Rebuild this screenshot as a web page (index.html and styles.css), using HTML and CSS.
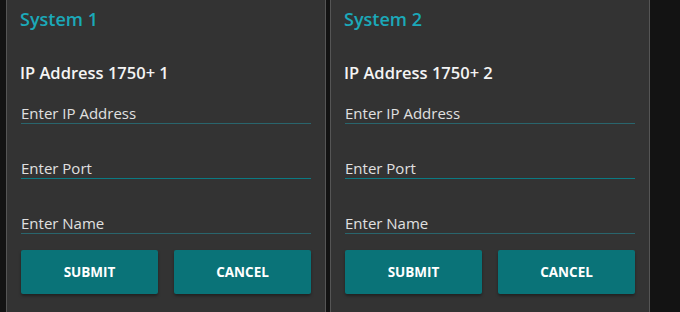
FILE: index.html
```html
<!DOCTYPE html>
<html lang="en">
<head>
  <meta charset="UTF-8" />
  <meta name="viewport" content="width=device-width, initial-scale=1.0"/>
  <title>Systems | IP Setup</title>
  <link rel="stylesheet" href="styles.css">
</head>
<body>
  <div class="systems">
    <div class="panel">
      <h2 class="panel-title">System 1</h2>
      <h3 class="panel-heading">IP Address 1750+ 1</h3>
      <div class="fields">
        <input type="text" class="field" placeholder="Enter IP Address" />
        <input type="text" class="field field-active" placeholder="Enter Port" />
        <input type="text" class="field" placeholder="Enter Name" />
      </div>
      <div class="actions">
        <button class="btn">SUBMIT</button>
        <button class="btn">CANCEL</button>
      </div>
    </div>

    <div class="panel">
      <h2 class="panel-title">System 2</h2>
      <h3 class="panel-heading">IP Address 1750+ 2</h3>
      <div class="fields">
        <input type="text" class="field" placeholder="Enter IP Address" />
        <input type="text" class="field field-active" placeholder="Enter Port" />
        <input type="text" class="field" placeholder="Enter Name" />
      </div>
      <div class="actions">
        <button class="btn">SUBMIT</button>
        <button class="btn">CANCEL</button>
      </div>
    </div>
  </div>
</body>
</html>
```

FILE: styles.css
```css
html, body {
  height: 100%;
  margin: 0;
  padding: 0;
  overflow: hidden;
}

body {
  font-family: 'Open Sans', 'Noto Sans', sans-serif;
  background: #131313;
  color: #eee;
}

.systems {
  display: flex;
  gap: 4px;
  padding-left: 6px;
  height: 100%;
}

.panel {
  width: 290px;
  min-height: 100%;
  padding: 0 14px;
  background: #333333;
  border-left: 1px solid #555;
  border-right: 1px solid #555;
}

.panel-title {
  margin: 7px 0 0 -1px;
  font-size: 18px;
  line-height: 24px;
  font-weight: 600;
  color: #1ba9b9;
}

.panel-heading {
  margin: 30px 0 0 -1px;
  font-size: 16.5px;
  line-height: 24px;
  font-weight: 600;
  color: #f4f4f4;
}

.fields {
  display: flex;
  flex-direction: column;
  gap: 34px;
  margin-top: 18px;
}

.field {
  display: block;
  width: 100%;
  height: 21px;
  box-sizing: border-box;
  padding: 0 0 1px;
  font-family: inherit;
  font-size: 15px;
  line-height: 20px;
  color: #ddd;
  background: transparent;
  border: none;
  border-bottom: 1px solid #29656d;
  outline: none;
}

.field::placeholder {
  color: #e0e0e0;
}

.field-active {
  border-bottom-color: #0b7a83;
}

.actions {
  display: grid;
  grid-template-columns: 1fr 1fr;
  gap: 16px;
  margin-top: 16px;
}

.btn {
  height: 44px;
  padding: 0;
  background-color: #0a7378;
  color: #fff;
  font-family: inherit;
  font-size: 13.5px;
  font-weight: 700;
  border: none;
  border-radius: 2px;
  box-shadow: 0 2px 3px rgba(0, 0, 0, 0.35);
  cursor: pointer;
}

.btn:hover {
  background-color: #0c8289;
}
```
